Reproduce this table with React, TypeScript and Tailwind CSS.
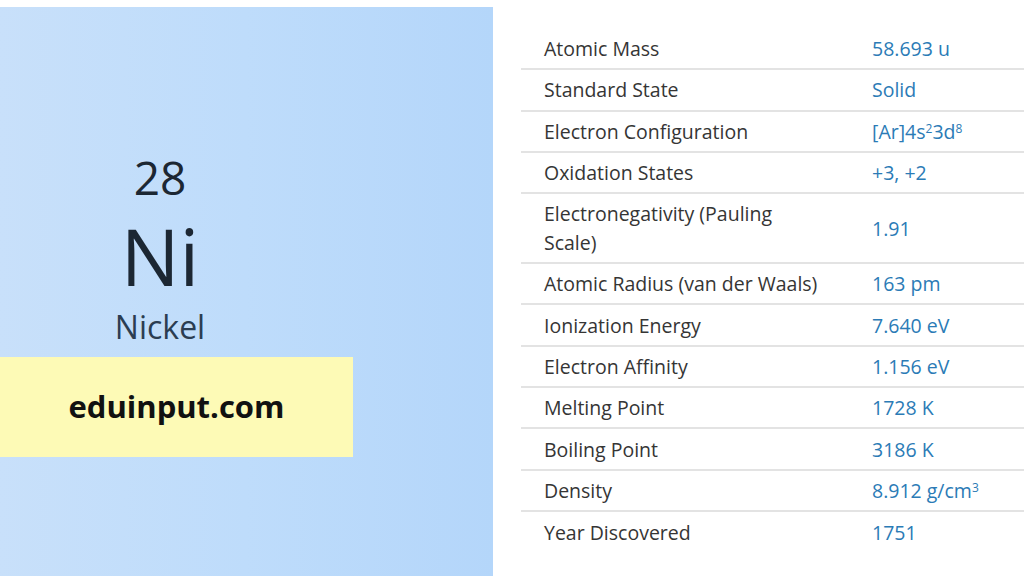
import React from 'react';

const rows: { label: string; value: React.ReactNode }[] = [
  { label: 'Atomic Mass', value: '58.693 u' },
  { label: 'Standard State', value: 'Solid' },
  {
    label: 'Electron Configuration',
    value: (
      <>
        [Ar]4s<sup className="text-[12px]">2</sup>3d<sup className="text-[12px]">8</sup>
      </>
    ),
  },
  { label: 'Oxidation States', value: '+3, +2' },
  { label: 'Electronegativity (Pauling Scale)', value: '1.91' },
  { label: 'Atomic Radius (van der Waals)', value: '163 pm' },
  { label: 'Ionization Energy', value: '7.640 eV' },
  { label: 'Electron Affinity', value: '1.156 eV' },
  { label: 'Melting Point', value: '1728 K' },
  { label: 'Boiling Point', value: '3186 K' },
  {
    label: 'Density',
    value: (
      <>
        8.912 g/cm<sup className="text-[12px]">3</sup>
      </>
    ),
  },
  { label: 'Year Discovered', value: '1751' },
];

export default function App() {
  return (
    <div className="flex w-[1024px] h-[576px] bg-white overflow-hidden font-['Open_Sans',sans-serif]">
      {/* element card */}
      <div className="w-[493px] mt-[7px] bg-gradient-to-r from-[#c8e0fa] via-[#bedcfb] to-[#b4d6fa] flex flex-col">
        <div className="w-[320px] flex flex-col items-center pt-[144px] text-[#1c2733]">
          <div className="text-[46px] leading-[52px]">28</div>
          <div className="text-[78px] leading-[84px] mt-[11px]">Ni</div>
          <div className="text-[32px] leading-[40px] text-[#2b3d52] mt-[9px]">Nickel</div>
        </div>
        <div className="mt-[10px] w-[353px] h-[100px] bg-[#fdfab6] flex items-center justify-center">
          <span className="font-bold text-[31px] text-[#111] pb-[2px]">eduinput.com</span>
        </div>
      </div>

      {/* properties table */}
      <div className="flex-1 pl-[28px] pt-[29px]">
        {rows.map((r, i) => (
          <div
            key={r.label}
            className={`flex items-center min-h-[41.3px] text-[19.5px] leading-[29px] ${
              i < rows.length - 1 ? 'border-b-2 border-[#e3e3e3]' : ''
            }`}
          >
            <div className="w-[351px] shrink-0 pl-[23px] pr-[50px] text-[#353535] py-[5px]">{r.label}</div>
            <div className="text-[#2b7bb6]">{r.value}</div>
          </div>
        ))}
      </div>
    </div>
  );
}
